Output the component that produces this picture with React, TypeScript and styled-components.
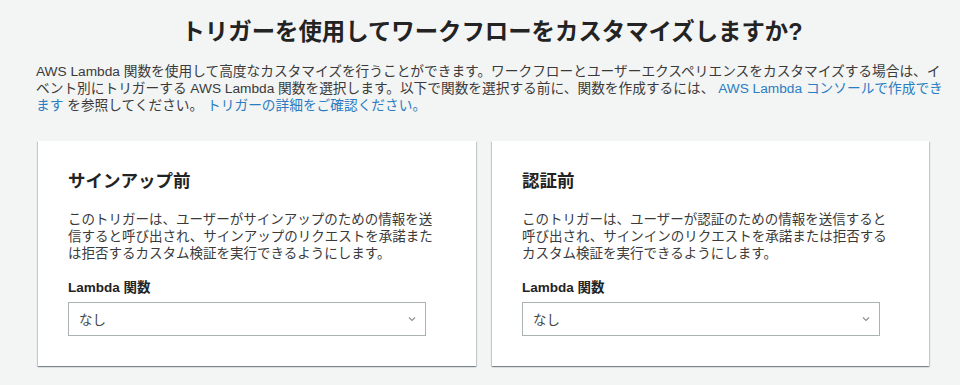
import styled, { createGlobalStyle } from "styled-components";

const GlobalStyle = createGlobalStyle`
  html, body {
    margin: 0;
    padding: 0;
    background-color: #f3f4f4;
  }
  body {
    font-family: "Liberation Sans", "Noto Sans CJK JP", sans-serif;
    color: #16191f;
  }
`;

const Page = styled.main`
  padding: 17px 12px 20px 36px;
  width: 912px;
`;

const Title = styled.h1`
  margin: 0;
  text-align: center;
  font-size: 23.4px;
  line-height: 30px;
  font-weight: 700;
  color: #232323;
`;

const Intro = styled.p`
  margin: 16px 0 0;
  font-size: 13.7px;
  line-height: 17px;
  color: #3a3a3a;
`;

const Link = styled.a`
  color: #2a7dc2;
  text-decoration: none;
`;

const CardGrid = styled.div`
  display: grid;
  grid-template-columns: 438px 437px;
  gap: 16px;
  margin: 27px 0 0 2px;
`;

const Card = styled.section`
  background: #fff;
  padding: 28px 30px 30px;
  box-shadow: 0 1px 1px 0 rgba(0, 28, 36, 0.3), 1px 1px 1px 0 rgba(0, 28, 36, 0.15),
    -1px 1px 1px 0 rgba(0, 28, 36, 0.15);
`;

const CardTitle = styled.h2`
  margin: 0;
  font-size: 17.5px;
  line-height: 24px;
  font-weight: 700;
  color: #232323;
`;

const CardText = styled.p`
  margin: 18px 0 0;
  max-width: 372px;
  font-size: 13.5px;
  line-height: 17px;
  color: #3a3a3a;
`;

const FieldLabel = styled.div`
  margin-top: 17px;
  font-size: 13.5px;
  line-height: 17px;
  font-weight: 700;
  color: #232323;
`;

const SelectBox = styled.div`
  margin-top: 6px;
  width: 358px;
  height: 34px;
  box-sizing: border-box;
  border: 1px solid #aab2b4;
  display: flex;
  align-items: center;
  justify-content: space-between;
  padding: 0 8px 0 10px;
  font-size: 13.5px;
  color: #444;
`;

const Chevron = () => (
  <svg width="10" height="8" viewBox="0 0 10 8">
    <path d="M2 2.5 L5 5.5 L8 2.5" fill="none" stroke="#8a9396" strokeWidth="1.2" />
  </svg>
);

const triggers = [
  {
    title: "サインアップ前",
    text: "このトリガーは、ユーザーがサインアップのための情報を送信すると呼び出され、サインアップのリクエストを承諾または拒否するカスタム検証を実行できるようにします。",
  },
  {
    title: "認証前",
    text: "このトリガーは、ユーザーが認証のための情報を送信すると呼び出され、サインインのリクエストを承諾または拒否するカスタム検証を実行できるようにします。",
  },
];

const App = () => (
  <>
    <GlobalStyle />
    <Page>
      <Title>トリガーを使用してワークフローをカスタマイズしますか?</Title>
      <Intro>
        AWS Lambda 関数を使用して高度なカスタマイズを行うことができます。ワークフローとユーザーエクスペリエンスをカスタマイズする場合は、イベント別にトリガーする AWS Lambda 関数を選択します。以下で関数を選択する前に、関数を作成するには、{" "}
        <Link href="#">AWS Lambda コンソールで作成できます</Link> を参照してください。{" "}
        <Link href="#">トリガーの詳細をご確認ください。</Link>
      </Intro>
      <CardGrid>
        {triggers.map((t) => (
          <Card key={t.title}>
            <CardTitle>{t.title}</CardTitle>
            <CardText>{t.text}</CardText>
            <FieldLabel>Lambda 関数</FieldLabel>
            <SelectBox>
              <span>なし</span>
              <Chevron />
            </SelectBox>
          </Card>
        ))}
      </CardGrid>
    </Page>
  </>
);

export default App;
